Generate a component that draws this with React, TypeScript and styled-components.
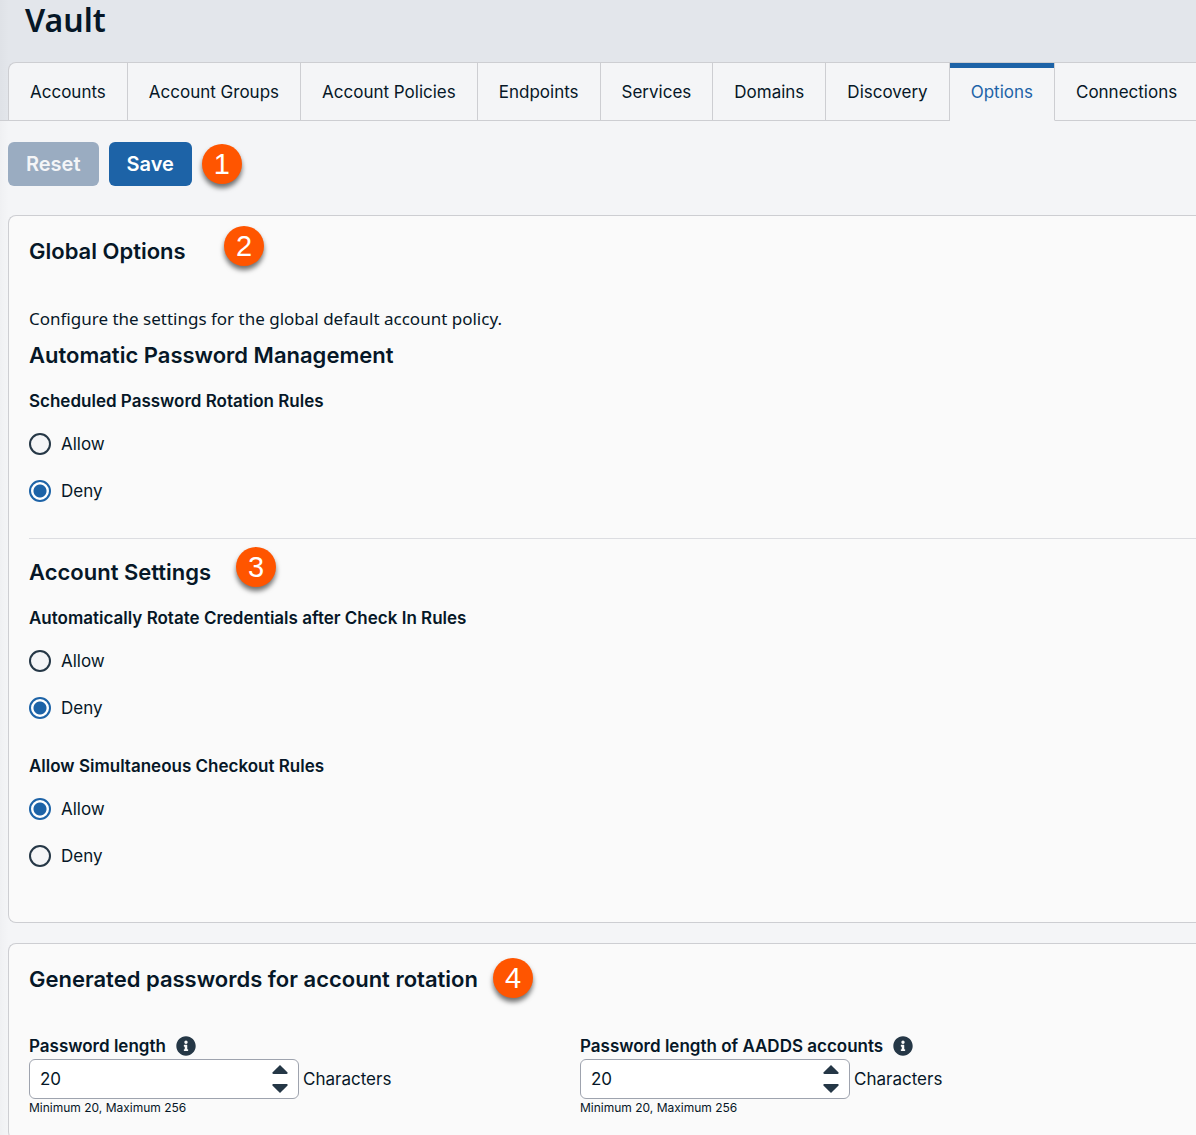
import React, { useId, useState } from "react";
import styled, { createGlobalStyle } from "styled-components";
import { FaInfoCircle } from "react-icons/fa";

const color = {
  ink: "#061727",
  slate: "#253746",
  accent: "#1d63a7",
  muted: "#9aacc1",
  line: "#cdced2",
  rule: "#dcdde1",
  header: "#e3e6eb",
  page: "#f4f5f7",
  panel: "#fafafa",
  callout: "#ff5500",
};

const inter = `Inter, "Liberation Sans", sans-serif`;
const noto = `"Noto Sans", "Open Sans", sans-serif`;
const edgeShade = "linear-gradient(to right, rgba(0, 0, 20, 0.02), transparent 9px)";

const GlobalStyle = createGlobalStyle`
  *, *::before, *::after { box-sizing: border-box; }
  html { scrollbar-width: none; }
  body {
    margin: 0;
    background: ${color.page};
    color: ${color.ink};
    font: 400 17px/24px ${inter};
    overflow-x: hidden;
  }
  h1, h2, h3, p, fieldset, legend { margin: 0; padding: 0; border: 0; }
  button, input { font: inherit; color: inherit; }
`;

const Page = styled.div`
  min-height: 100vh;
  background: ${edgeShade};
`;

const Header = styled.header`
  background: ${edgeShade}, ${color.header};
  box-shadow: inset 0 -1px ${color.line};
`;

const Title = styled.h1`
  padding: 0 25px 22px;
  font: 600 32px/40px ${noto};
`;

const Tabs = styled.nav`
  display: flex;
  margin-left: 8px;
  border: 1px solid ${color.line};
  border-width: 1px 0 0 1px;
  border-top-left-radius: 8px;
  background: ${color.page};
  overflow: hidden;
`;

const Tab = styled.a<{ $active?: boolean }>`
  flex: none;
  height: 58px;
  padding: 0 21px;
  line-height: 58px;
  white-space: nowrap;
  text-decoration: none;
  color: ${(p) => (p.$active ? color.accent : color.ink)};
  border-right: 1px solid ${color.line};
  border-bottom: 1px solid ${(p) => (p.$active ? color.page : color.line)};
  box-shadow: ${(p) => (p.$active ? `inset 0 5px ${color.accent}` : "none")};

  &:last-child {
    flex: 1 0 auto;
    border-right: 0;
  }
`;

const Main = styled.main`
  display: flex;
  flex-direction: column;
  gap: 20px;
  padding: 0 0 20px 8px;
`;

const Toolbar = styled.div`
  display: flex;
  align-items: center;
  gap: 10px;
  padding: 21px 0 9px;
`;

const Button = styled.button`
  height: 44px;
  padding: 0 18px;
  border: 0;
  border-radius: 6px;
  background: ${color.accent};
  color: #fff;
  font-size: 20px;
  font-weight: 600;

  &:disabled {
    background: ${color.muted};
    color: #f4f5f7;
  }
`;

const Callout = styled.span`
  display: inline-flex;
  align-items: center;
  justify-content: center;
  width: 40px;
  height: 40px;
  border-radius: 50%;
  background: ${color.callout};
  color: #fff;
  font: 400 29px/40px "Liberation Sans", Arial, sans-serif;
  box-shadow: 0 4px 5px rgba(0, 0, 0, 0.55);
`;

const PinnedCallout = styled(Callout)<{ $x: number; $y: number }>`
  position: absolute;
  left: ${(p) => p.$x}px;
  top: ${(p) => p.$y}px;
`;

const Panel = styled.section<{ $roomy?: boolean }>`
  padding: 20px 0 ${(p) => (p.$roomy ? 54 : 22)}px 20px;
  border: 1px solid ${color.line};
  border-right: 0;
  border-radius: 8px 0 0 8px;
  background: ${color.panel};
`;

const Heading = styled.h2`
  position: relative;
  font-size: 22px;
  font-weight: 600;
  line-height: 30px;
`;

const Description = styled.p`
  margin: 41px 0 9px;
  font-family: ${noto};
`;

const Group = styled.fieldset`
  min-width: 0;
  padding-top: 19px;
  display: flex;
  flex-direction: column;

  & + & { padding-top: 34px; }
`;

const Legend = styled.legend`
  float: left;
  font-weight: 600;
`;

const Choices = styled.div`
  display: flex;
  flex-direction: column;
  gap: 23px;
  padding-top: 19px;
  clear: both;
`;

const Choice = styled.label`
  display: flex;
  align-items: center;
  align-self: flex-start;
  gap: 10px;
`;

const Radio = styled.input`
  appearance: none;
  width: 22px;
  height: 22px;
  margin: 0;
  border: 2px solid ${color.slate};
  border-radius: 50%;
  background: ${color.page};

  &:checked {
    border-color: ${color.accent};
    background: radial-gradient(circle, ${color.accent} 6px, #fff 7px);
  }
`;

const Divider = styled.hr`
  margin: 35px 0 18px;
  border: 0;
  border-top: 1px solid ${color.rule};
`;

const Fields = styled.div`
  display: grid;
  grid-template-columns: minmax(370px, 551px) 1fr;
  padding-top: 39px;
`;

const Label = styled.div`
  display: flex;
  align-items: center;
  gap: 10px;
  height: 26px;
  font-weight: 600;

  svg {
    width: 20px;
    height: 20px;
    color: ${color.slate};
  }
`;

const InputRow = styled.div`
  display: flex;
  align-items: center;
  gap: 4px;
`;

const NumberBox = styled.div`
  display: flex;
  width: 270px;
  height: 40px;
  border: 1px solid #9ea3ae;
  border-radius: 6px;
  background: #fff;
  overflow: hidden;
`;

const NumberInput = styled.input`
  flex: 1;
  min-width: 0;
  padding: 0 10px;
  border: 0;
  outline: 0;
  background: none;
  appearance: textfield;

  &::-webkit-inner-spin-button { appearance: none; }
`;

const Stepper = styled.div`
  display: flex;
  flex-direction: column;
  justify-content: center;
  padding-right: 10px;
`;

const Step = styled.button`
  display: flex;
  align-items: center;
  justify-content: center;
  width: 16px;
  height: 19px;
  padding: 0;
  border: 0;
  background: none;
`;

const Hint = styled.p`
  font-size: 12px;
  line-height: 18px;
`;

const tabs = [
  "Accounts",
  "Account Groups",
  "Account Policies",
  "Endpoints",
  "Services",
  "Domains",
  "Discovery",
  "Options",
  "Connections",
];

function RadioGroup({ title, initial }: { title: string; initial: "Allow" | "Deny" }) {
  const name = useId();
  const [value, setValue] = useState<string>(initial);
  return (
    <Group>
      <Legend>{title}</Legend>
      <Choices>
        {["Allow", "Deny"].map((option) => (
          <Choice key={option}>
            <Radio
              type="radio"
              name={name}
              checked={value === option}
              onChange={() => setValue(option)}
            />
            {option}
          </Choice>
        ))}
      </Choices>
    </Group>
  );
}

function LengthField({ label }: { label: string }) {
  const id = useId();
  const [value, setValue] = useState(20);
  const step = (delta: number) => setValue(Math.min(256, Math.max(20, value + delta)));
  return (
    <div>
      <Label>
        <label htmlFor={id}>{label}</label>
        <FaInfoCircle aria-hidden />
      </Label>
      <InputRow>
        <NumberBox>
          <NumberInput
            id={id}
            type="number"
            min={20}
            max={256}
            value={value}
            onChange={(e) => setValue(Number(e.target.value))}
          />
          <Stepper>
            <Step type="button" aria-label="Increase" onClick={() => step(1)}>
              <svg width="16" height="9" viewBox="0 0 16 9" fill={color.slate}>
                <path d="M8 0 15.6 7.6Q16 9 14.6 9H1.4Q0 9 .4 7.6Z" />
              </svg>
            </Step>
            <Step type="button" aria-label="Decrease" onClick={() => step(-1)}>
              <svg width="16" height="9" viewBox="0 0 16 9" fill={color.slate}>
                <path d="M8 9 15.6 1.4Q16 0 14.6 0H1.4Q0 0 .4 1.4Z" />
              </svg>
            </Step>
          </Stepper>
        </NumberBox>
        <span>Characters</span>
      </InputRow>
      <Hint>Minimum 20, Maximum 256</Hint>
    </div>
  );
}

export default function App() {
  return (
    <Page>
      <GlobalStyle />
      <Header>
        <Title>Vault</Title>
        <Tabs>
          {tabs.map((tab) => (
            <Tab key={tab} href="#" $active={tab === "Options"}>
              {tab}
            </Tab>
          ))}
        </Tabs>
      </Header>
      <Main>
        <Toolbar>
          <Button type="button" disabled>Reset</Button>
          <Button type="button">Save</Button>
          <Callout>1</Callout>
        </Toolbar>
        <Panel $roomy>
          <Heading>
            Global Options
            <PinnedCallout $x={195} $y={-10}>2</PinnedCallout>
          </Heading>
          <Description>Configure the settings for the global default account policy.</Description>
          <Heading as="h3">Automatic Password Management</Heading>
          <RadioGroup title="Scheduled Password Rotation Rules" initial="Deny" />
          <Divider />
          <Heading as="h3">
            Account Settings
            <PinnedCallout $x={207} $y={-10}>3</PinnedCallout>
          </Heading>
          <RadioGroup title="Automatically Rotate Credentials after Check In Rules" initial="Deny" />
          <RadioGroup title="Allow Simultaneous Checkout Rules" initial="Allow" />
        </Panel>
        <Panel>
          <Heading>
            Generated passwords for account rotation
            <PinnedCallout $x={464} $y={-6}>4</PinnedCallout>
          </Heading>
          <Fields>
            <LengthField label="Password length" />
            <LengthField label="Password length of AADDS accounts" />
          </Fields>
        </Panel>
      </Main>
    </Page>
  );
}
